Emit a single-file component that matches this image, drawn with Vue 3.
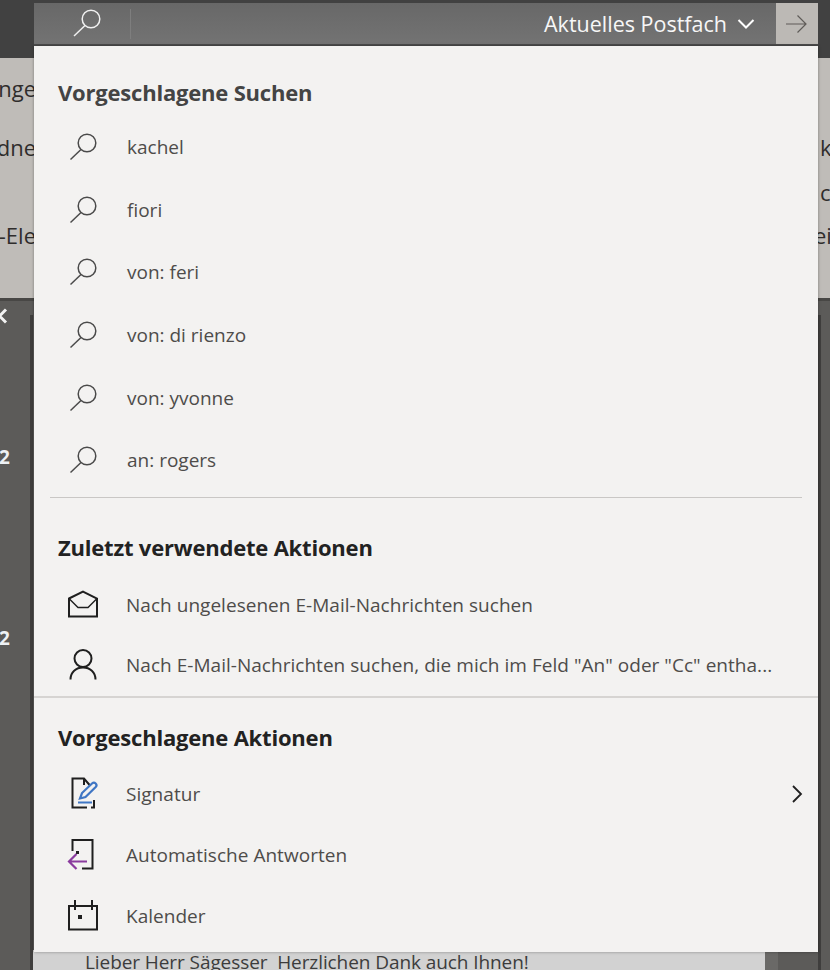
<script setup>
const searches = ['kachel', 'fiori', 'von: feri', 'von: di rienzo', 'von: yvonne', 'an: rogers']
</script>

<template>
  <div class="stage">
    <div class="topbar"></div>
    <div class="ribbon">
      <div class="ribbon-col left">
        <span class="r1">nge</span>
        <span class="r2">dne</span>
        <span class="r3">t-Ele</span>
      </div>
      <div class="ribbon-col right">
        <span class="k">k</span>
        <span class="c">c</span>
        <span class="e">ei</span>
      </div>
    </div>
    <div class="lower">
      <div class="rail">
        <svg class="back" width="10" height="16" viewBox="0 0 10 16" fill="none" stroke="#f2f2f2" stroke-width="3">
          <path d="M8 1.5 1.5 8 8 14.5" />
        </svg>
        <span class="n1">2</span>
        <span class="n2">2</span>
      </div>
      <div class="railline"></div>
      <div class="mail"><span>Lieber Herr Sägesser&nbsp; Herzlichen Dank auch Ihnen!</span></div>
      <div class="scroll"></div>
    </div>

    <div class="searchbar">
      <svg class="barglass" width="30" height="30" viewBox="0 0 30 30" fill="none" stroke="#f0f0f0" stroke-width="1.5">
        <circle cx="20" cy="11" r="8.8" />
        <path d="M14 17.5 3 28" />
      </svg>
      <div class="sep"></div>
      <div class="scope">Aktuelles Postfach</div>
      <svg class="chev" width="20" height="14" viewBox="0 0 20 14" fill="none" stroke="#fff" stroke-width="2">
        <path d="M2.5 3 10 10.5 17.5 3" />
      </svg>
      <div class="go">
        <svg width="24" height="20" viewBox="0 0 24 20" fill="none" stroke="#5f5b58" stroke-width="1.2">
          <path d="M1 10H21M12.5 1.5 21 10 12.5 18.5" />
        </svg>
      </div>
    </div>

    <div class="panel">
      <section class="sec-search">
        <h2 class="first">Vorgeschlagene Suchen</h2>
        <div v-for="s in searches" :key="s" class="row search">
          <svg class="ico" width="30" height="30" viewBox="0 0 30 30" fill="none" stroke="#4a4a4a" stroke-width="1.5">
            <circle cx="19" cy="10" r="8.8" />
            <path d="M13 16.5 2.5 26.5" />
          </svg>
          <span>{{ s }}</span>
        </div>
      </section>
      <div class="div inset"></div>

      <section class="sec-recent">
        <h2>Zuletzt verwendete Aktionen</h2>
        <div class="row action">
          <svg class="ico" width="32" height="30" viewBox="0 0 32 30" fill="none" stroke="#1f1f1f" stroke-width="2">
            <path d="M2 8.5 16 1.5 30 8.5V26.5H2Z" />
            <path d="M2 8.5 11 17.5H21L30 8.5" stroke-width="1.4" />
          </svg>
          <span>Nach ungelesenen E-Mail-Nachrichten suchen</span>
        </div>
        <div class="row action">
          <svg class="ico" width="32" height="34" viewBox="0 0 32 34" fill="none" stroke="#1f1f1f" stroke-width="2">
            <circle cx="16" cy="10.5" r="8.5" />
            <path d="M3.5 31.5C3.5 24 9 19.5 16 19.5S28.5 24 28.5 31.5" />
          </svg>
          <span>Nach E-Mail-Nachrichten suchen, die mich im Feld "An" oder "Cc" entha...</span>
        </div>
      </section>
      <div class="div"></div>

      <section class="sec-suggest">
        <h2>Vorgeschlagene Aktionen</h2>
        <div class="row action">
          <svg class="ico" width="32" height="34" viewBox="0 0 32 34" fill="none">
            <path d="M20 30.5H5.5V1.5H17L23 8.5M17 1.5V8M27 23V30.5H24" stroke="#1f1f1f" stroke-width="2" />
            <path d="M13 21.5 15 16 25 6.5C27.5 4.2 31 7.5 28.7 10L18.5 20ZM11 25.5H25" stroke="#3f76c4" stroke-width="2.2" />
          </svg>
          <span>Signatur</span>
          <svg class="more" width="14" height="20" viewBox="0 0 14 20" fill="none" stroke="#1f1f1f" stroke-width="1.8">
            <path d="M3 2 11 10 3 18" />
          </svg>
        </div>
        <div class="row action">
          <svg class="ico" width="32" height="34" viewBox="0 0 32 34" fill="none">
            <path d="M5.5 13V2H25.5V30.5H15" stroke="#1f1f1f" stroke-width="2" />
            <rect x="9" y="13" width="3" height="3" fill="#1f1f1f" />
            <path d="M20 23.5H2.5M9.5 16 2 23.5 9.5 31" stroke="#8a3b9e" stroke-width="2.2" />
          </svg>
          <span>Automatische Antworten</span>
        </div>
        <div class="row action">
          <svg class="ico" width="32" height="32" viewBox="0 0 32 32" fill="none" stroke="#1f1f1f" stroke-width="2">
            <path d="M2 6H30V29.5H2ZM8 0V10M25 0V10" />
            <rect x="11" y="15" width="4" height="4" fill="#1f1f1f" stroke="none" />
          </svg>
          <span>Kalender</span>
        </div>
      </section>
    </div>
  </div>
</template>

<style>
body { margin: 0; background: #5b5a58; }
</style>

<style scoped>
.stage {
  position: relative;
  width: 830px;
  height: 970px;
  overflow: hidden;
  display: flex;
  flex-direction: column;
  font-family: "Open Sans", "Noto Sans", sans-serif;
}
.topbar { height: 58px; background: #414141; flex: none; }
.ribbon {
  height: 240px;
  flex: none;
  background: #bfbcb8;
  display: flex;
  justify-content: space-between;
  color: #2f2d2c;
  font-size: 22px;
  overflow: hidden;
}
.ribbon-col { position: relative; width: 34px; }
.ribbon-col.right { width: 12px; }
.ribbon-col span { position: absolute; line-height: 26px; white-space: nowrap; }
.left span { right: -2px; }
.right span { left: 2px; }
.r1 { top: 17px; }
.r2 { top: 76px; }
.r3 { top: 164px; }
.k { top: 76px; }
.c { top: 121px; }
.ribbon-col .e { top: 164px; left: -4px; }
.lower {
  flex: 1;
  display: flex;
  background: #5c5b59;
  border-top: 3px solid #484745;
}
.rail { width: 30px; position: relative; color: #eef1f4; font-weight: 700; font-size: 19px; flex: none; }
.rail span { position: absolute; left: -1px; line-height: 24px; }
.back { position: absolute; top: 7px; left: -2px; }
.n1 { top: 144px; }
.n2 { top: 325px; }
.railline { width: 3px; background: #3f3e3d; margin-top: 14px; flex: none; }
.mail {
  width: 732px;
  flex: none;
  display: flex;
  align-items: flex-end;
  padding-left: 52px;
  box-sizing: border-box;
  background: linear-gradient(#d2d2d2, #d2d2d2) bottom / 100% 20px no-repeat;
  color: #3c3c3c;
  font-size: 19px;
  line-height: 20px;
  letter-spacing: -0.08px;
}
.mail span { position: relative; top: 2px; white-space: nowrap; }
.scroll {
  flex: 1;
  background:
    linear-gradient(#3f3e3d, #3f3e3d) 53px 14px / 3px 100% no-repeat,
    linear-gradient(#6a6967, #6a6967) 0 bottom / 13px 20px no-repeat;
}

.searchbar {
  position: absolute;
  left: 34px;
  top: 3px;
  width: 784px;
  height: 43px;
  background: linear-gradient(#686868, #737373);
  border-bottom: 2px solid #4d4d4d;
  box-sizing: border-box;
  display: flex;
  align-items: center;
  color: #f7f7f7;
  font-size: 21.5px;
}
.barglass { margin-left: 37px; flex: none; position: relative; top: -1px; }
.sep { width: 1px; height: 30px; background: #7e7e7e; margin-left: 29px; flex: none; }
.scope { margin-left: auto; }
.chev { margin-left: 9px; margin-right: 20px; flex: none; }
.go {
  width: 42px;
  height: 41px;
  background: #bcb9b5;
  display: flex;
  align-items: center;
  justify-content: center;
  flex: none;
}

.panel {
  position: absolute;
  left: 34px;
  top: 46px;
  width: 784px;
  height: 906px;
  background: #f3f2f1;
  box-shadow: 0 0 3px rgba(0,0,0,.35);
  color: #4e4c4a;
  font-size: 19px;
}
h2 {
  margin: 0;
  padding-left: 24px;
  font-size: 22px;
  font-weight: 700;
  color: #222;
  line-height: 28px;
  letter-spacing: -0.2px;
}
h2.first { color: #444; padding-top: 32px; margin-bottom: 11px; }
.row { display: flex; align-items: center; position: relative; white-space: nowrap; }
.search { height: 62.6px; padding-left: 34px; }
.search .ico { flex: none; margin-right: 29px; }
.search span { position: relative; top: -1px; }
.action { height: 60.6px; padding-left: 33px; }
.action .ico { flex: none; margin-right: 27px; }
.action span { letter-spacing: 0.03px; }
.more { position: absolute; right: 14px; }
.div { height: 1px; background: #c9c7c5; }
.div.inset { margin: 4.6px 16px 0; }
.sec-recent { padding-top: 35px; }
.sec-recent h2 { margin-bottom: 14px; }
.sec-recent .action { height: 60px; }
.sec-recent + .div { margin-top: 1px; height: 2px; background: #d6d4d2; }
.sec-suggest { padding-top: 25px; }
.sec-suggest h2 { margin-bottom: 13px; }
</style>
